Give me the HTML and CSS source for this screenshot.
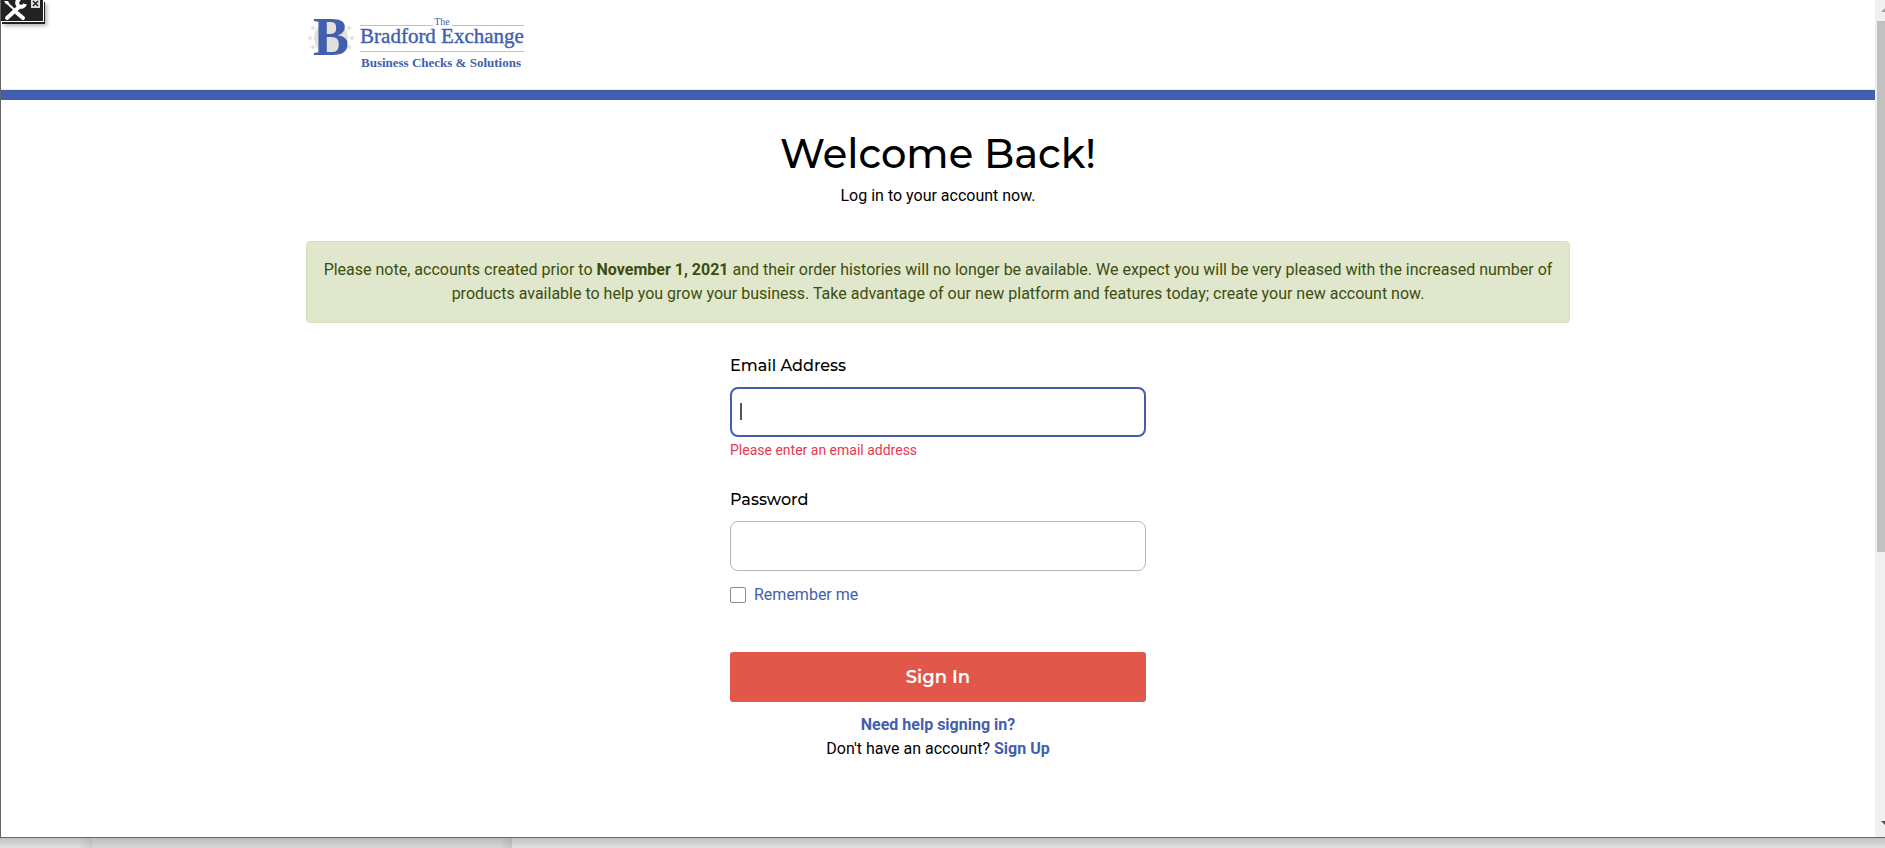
FILE: index.html
```html
<!DOCTYPE html>
<html lang="en">
<head>
  <meta charset="UTF-8">
  <meta name="viewport" content="width=device-width, initial-scale=1.0">
  <title>Sign In | The Bradford Exchange Business Checks &amp; Solutions</title>
  <link rel="stylesheet" href="styles.css">
</head>
<body>
  <div class="window">
    <div class="page">
      <header class="site-header">
        <div class="container">
          <a class="logo" href="#">
            <svg width="222" height="64" viewBox="0 0 222 64" role="img" aria-label="The Bradford Exchange Business Checks and Solutions">
              <defs>
                <path id="star" d="M0-3.2 .8-1 3.1-1 1.3 .4 1.9 2.7 0 1.3-1.9 2.7-1.3 .4-3.1-1-.8-1z"/>
              </defs>
              <circle class="logo-seal" cx="25" cy="32" r="17"/>
              <g class="logo-seal">
                <use href="#star" x="7" y="22"/>
                <use href="#star" x="4" y="32"/>
                <use href="#star" x="7" y="41"/>
                <use href="#star" x="43" y="22"/>
                <use href="#star" x="46" y="32"/>
                <use href="#star" x="43" y="41"/>
              </g>
              <text class="logo-letter" x="25" y="49">B</text>
              <path class="logo-rule" d="M54 19.5h73M146 19.5h72M54 45.5h164"/>
              <text class="logo-the" x="136" y="19">The</text>
              <text class="logo-name" x="136" y="37">Bradford Exchange</text>
              <text class="logo-tag" x="135" y="61">Business Checks &amp; Solutions</text>
            </svg>
          </a>
        </div>
      </header>

      <main class="container">
        <h1>Welcome Back!</h1>
        <p class="subtitle">Log in to your account now.</p>

        <div class="alert">
          Please note, accounts created prior to <strong>November 1, 2021</strong> and their order histories will no longer be available. We expect you will be very pleased with the increased number of products available to help you grow your business. Take advantage of our new platform and features today; create your new account now.
        </div>

        <form class="login-form">
          <div class="field">
            <label for="email">Email Address</label>
            <div class="input-wrap">
              <input class="text-input focused" type="email" id="email" aria-describedby="emailError">
              <span class="caret"></span>
            </div>
            <div class="error-message" id="emailError">Please enter an email address</div>
          </div>
          <div class="field">
            <label for="password">Password</label>
            <input class="text-input" type="password" id="password">
          </div>
          <div class="remember">
            <input type="checkbox" id="remember">
            <label for="remember">Remember me</label>
          </div>
          <button class="sign-in" type="submit">Sign In</button>
          <div class="help-links">
            <a href="#">Need help signing in?</a>
            <div>Don't have an account? <a href="#">Sign Up</a></div>
          </div>
        </form>
      </main>
    </div>

    <div class="scrollbar">
      <svg class="arrow-up" width="4" height="4" viewBox="0 0 4 4"><path d="M0 4 4 0v4z"/></svg>
      <div class="thumb"></div>
      <svg class="arrow-down" width="4" height="4" viewBox="0 0 4 4"><path d="M0 0h4v4z"/></svg>
    </div>

    <div class="tools">
      <svg width="42" height="21" viewBox="0 0 42 21">
        <path d="M5 2 17 13" stroke="#fff" stroke-width="2"/>
        <path d="M16 13 22 18" stroke="#fff" stroke-width="4" stroke-linecap="round"/>
        <path d="M6 18 18 7" stroke="#fff" stroke-width="4" stroke-linecap="round"/>
        <path d="M19-1a4 4 0 1 0 5 5" fill="none" stroke="#fff" stroke-width="4"/>
        <path d="M3 1 7 1 9 5 5 4z" fill="#fff"/>
        <rect x="30" y="-1" width="9" height="9" fill="#ddd"/>
        <path d="M32 1 37 6M37 1 32 6" stroke="#222" stroke-width="1.500"/>
      </svg>
    </div>
  </div>
  <div class="backdrop">
    <div class="backdrop-left"></div>
    <div class="backdrop-tab"></div>
  </div>
</body>
</html>
```

FILE: styles.css
```css
* {
  box-sizing: border-box;
}
body {
  margin: 0;
  min-height: 100vh;
  display: flex;
  flex-direction: column;
  font-family: Roboto, "Liberation Sans", sans-serif;
  font-size: 16px;
  line-height: 24px;
  color: #000;
  background-color: #fff;
}
a {
  color: #425fae;
  font-weight: bold;
  text-decoration: none;
}
.window {
  position: relative;
  flex: 1;
  display: flex;
  border-left: 1px solid #666;
  border-bottom: 1px solid #666;
}
.page {
  flex: 1;
}
.container {
  max-width: 1264px;
  margin: 0 auto;
}

/* header */
.site-header {
  height: 100px;
  padding-top: 6px;
  border-bottom: 10px solid #425fae;
  box-shadow: inset 0 -1px #e8ebe8;
}
.logo {
  display: inline-block;
}
.logo svg {
  display: block;
}
.logo text {
  font-family: "Liberation Serif", serif;
  font-weight: 400;
  fill: #425fae;
  text-anchor: middle;
}
.logo-seal {
  fill: #e3dfda;
}
.logo-rule {
  stroke: #b3c3e6;
}
.logo .logo-letter {
  font-size: 54px;
  font-weight: bold;
}
.logo .logo-the {
  font-size: 10px;
}
.logo .logo-name {
  font-size: 21px;
  stroke: #425fae;
  stroke-width: 0.4;
}
.logo .logo-tag {
  font-size: 13px;
  font-weight: bold;
}

/* content */
main {
  padding-top: 30px;
  text-align: center;
}
h1 {
  margin: 0 0 6px;
  font-family: Montserrat, Inter, sans-serif;
  font-size: 40px;
  font-weight: 500;
  line-height: 48px;
}
.subtitle {
  margin: 0 0 33px;
}
.alert {
  padding: 16px;
  border: 1px solid #d5dfb9;
  border-radius: 4px;
  background-color: #e0e7cd;
  color: #3d4d0f;
}
.login-form {
  width: 416px;
  max-width: 100%;
  margin: 31px auto 0;
  text-align: left;
}
.field {
  margin-bottom: 28px;
}
.field label {
  display: block;
  margin-bottom: 9px;
  font-family: Montserrat, Inter, sans-serif;
  font-weight: 500;
}
.input-wrap {
  position: relative;
}
.text-input {
  display: block;
  width: 100%;
  height: 50px;
  padding: 8px;
  border: 1px solid #b8b8b8;
  border-radius: 8px;
  background-color: #fff;
  font: inherit;
  outline: none;
}
.text-input.focused {
  border: 2px solid #425fae;
}
.caret {
  position: absolute;
  left: 10px;
  top: 16px;
  width: 2px;
  height: 17px;
  background-color: #555;
}
.error-message {
  margin-top: 3px;
  font-size: 14px;
  line-height: 20px;
  color: #e63950;
}
.remember {
  display: flex;
  align-items: center;
  gap: 8px;
  margin: -16px 0 45px;
  color: #425fae;
}
.remember input {
  appearance: none;
  width: 16px;
  height: 16px;
  margin: 0;
  border: 1px solid #8a8a8a;
  border-radius: 2px;
  background-color: #fff;
}
.sign-in {
  display: block;
  width: 100%;
  height: 50px;
  border: none;
  border-radius: 3px;
  background-color: #e1574a;
  color: #fff;
  font-family: Montserrat, Inter, sans-serif;
  font-size: 18px;
  font-weight: 600;
}
.help-links {
  margin-top: 11px;
  text-align: center;
}

/* scrollbar */
.scrollbar {
  display: flex;
  flex-direction: column;
  align-items: flex-end;
  width: 10px;
  padding: 8px 0 12px;
  background-color: #f0f0f0;
}
.arrow-up {
  fill: #a3a3a3;
}
.arrow-down {
  margin-top: auto;
  fill: #505050;
}
.thumb {
  width: 8px;
  height: 65%;
  margin-top: 9px;
  background-color: #c1c1c1;
}

/* tools badge in the corner */
.tools {
  position: absolute;
  left: 0;
  top: 0;
  border-right: 1px solid #fff;
  border-bottom: 1px solid #fff;
  background-color: #222;
  box-shadow: 1px 2px #222, 3px 4px 4px rgba(0, 0, 0, 0.3);
}
.tools svg {
  display: block;
}

/* strip of the page behind the window */
.backdrop {
  display: flex;
  height: 10px;
  background: linear-gradient(#c2c2c2, #e0e0e0);
}
.backdrop-left {
  width: 92px;
  background: linear-gradient(to right, transparent 85%, rgba(0, 0, 0, 0.08));
}
.backdrop-tab {
  width: 420px;
  background: linear-gradient(to right, transparent 97%, rgba(0, 0, 0, 0.08)), linear-gradient(#bcbcbc, #d9d9d9);
}
```
